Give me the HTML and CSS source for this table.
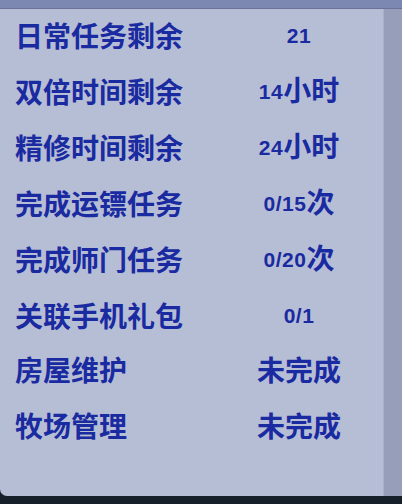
FILE: index.html
```html
<!DOCTYPE html>
<html lang="zh">
<head>
<meta charset="utf-8">
<link rel="stylesheet" href="styles.css">
</head>
<body>
<div class="screen">
  <div class="topbar"></div>
  <div class="main">
    <div class="panel">
      <div class="row"><span class="label">日常任务剩余</span><span class="value"><span class="num">21</span></span></div>
      <div class="row"><span class="label">双倍时间剩余</span><span class="value"><span class="num">14</span>小时</span></div>
      <div class="row"><span class="label">精修时间剩余</span><span class="value"><span class="num">24</span>小时</span></div>
      <div class="row"><span class="label">完成运镖任务</span><span class="value"><span class="num">0/15</span>次</span></div>
      <div class="row"><span class="label">完成师门任务</span><span class="value"><span class="num">0/20</span>次</span></div>
      <div class="row"><span class="label">关联手机礼包</span><span class="value"><span class="num">0/1</span></span></div>
      <div class="row"><span class="label">房屋维护</span><span class="value">未完成</span></div>
      <div class="row"><span class="label">牧场管理</span><span class="value">未完成</span></div>
    </div>
    <div class="strip"></div>
  </div>
</div>
</body>
</html>
```

FILE: styles.css
```css
html, body {
  margin: 0;
  padding: 0;
}
body {
  width: 402px;
  height: 504px;
  overflow: hidden;
  background: #16202a;
}
.screen {
  display: flex;
  flex-direction: column;
  width: 402px;
  height: 504px;
}
.topbar {
  height: 8px;
  background: #7c87b2;
  border-bottom: 1px solid #68729a;
  flex: none;
}
.main {
  display: flex;
  height: 487px;
  flex: none;
  overflow: hidden;
  border-bottom-left-radius: 7px;
}
.panel {
  flex: 1;
  background: #b6bed6;
  display: flex;
  flex-direction: column;
}
.strip {
  width: 18px;
  flex: none;
  background: #979eb9;
  border-left: 1px solid #a9b0c9;
}
.row {
  height: 48px;
  padding: 0 4px 8px 15px;
  flex: none;
  display: grid;
  grid-template-columns: 1fr 160px;
  align-items: center;
  font-family: "Noto Sans CJK SC", "Liberation Sans", sans-serif;
  font-weight: bold;
  font-size: 28px;
  line-height: 48px;
  color: #1a2aa0;
}
.label {
  white-space: nowrap;
}
.value {
  text-align: center;
  white-space: nowrap;
}
.num {
  font-family: "Liberation Sans", sans-serif;
  font-weight: bold;
  font-size: 21px;
  letter-spacing: 0.5px;
  vertical-align: 2px;
}
```
